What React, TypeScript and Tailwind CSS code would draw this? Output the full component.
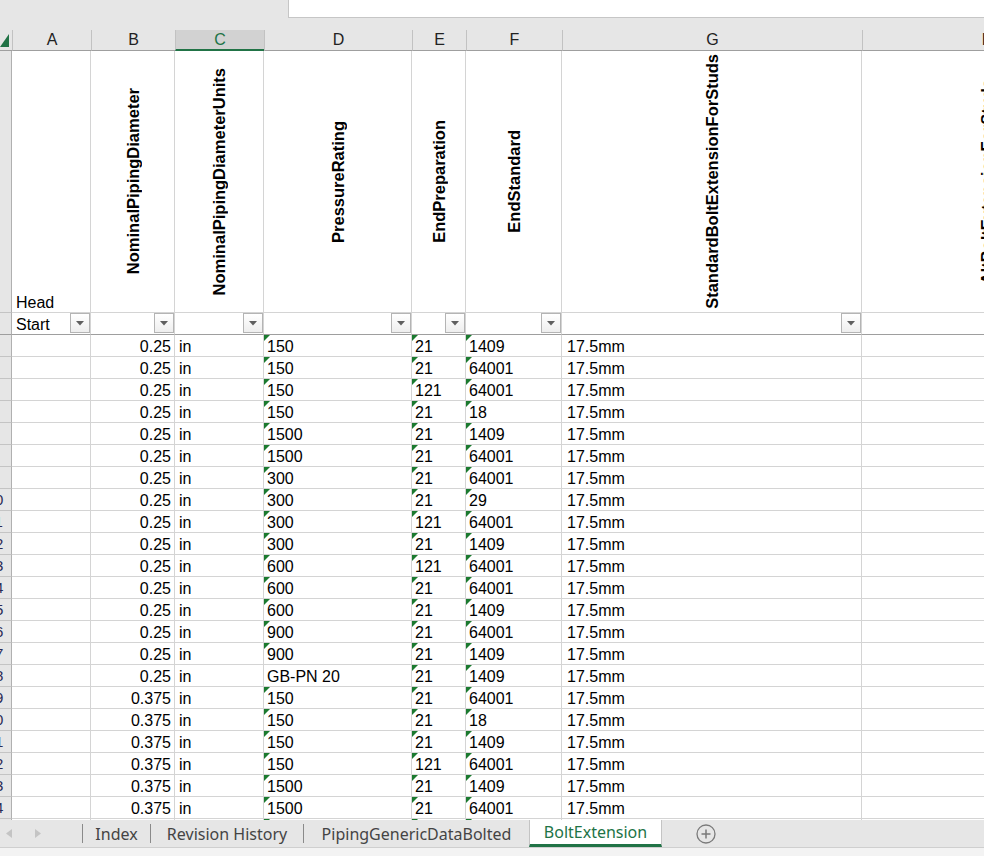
import React from 'react';

const COLS = [12, 79, 84, 89, 148, 54, 96, 300, 250];
const LETTERS = ['', 'A', 'B', 'C', 'D', 'E', 'F', 'G', 'H'];

const HEADERS = [
  '',
  '',
  'NominalPipingDiameter',
  'NominalPipingDiameterUnits',
  'PressureRating',
  'EndPreparation',
  'EndStandard',
  'StandardBoltExtensionForStuds',
  'AltBoltExtensionForStuds',
];

// [diameter, pressure, endPrep, endStd]
const ROWS: [string, string, string, string][] = [
  ['0.25', '150', '21', '1409'],
  ['0.25', '150', '21', '64001'],
  ['0.25', '150', '121', '64001'],
  ['0.25', '150', '21', '18'],
  ['0.25', '1500', '21', '1409'],
  ['0.25', '1500', '21', '64001'],
  ['0.25', '300', '21', '64001'],
  ['0.25', '300', '21', '29'],
  ['0.25', '300', '121', '64001'],
  ['0.25', '300', '21', '1409'],
  ['0.25', '600', '121', '64001'],
  ['0.25', '600', '21', '64001'],
  ['0.25', '600', '21', '1409'],
  ['0.25', '900', '21', '64001'],
  ['0.25', '900', '21', '1409'],
  ['0.25', 'GB-PN 20', '21', '1409'],
  ['0.375', '150', '21', '64001'],
  ['0.375', '150', '21', '18'],
  ['0.375', '150', '21', '1409'],
  ['0.375', '150', '121', '64001'],
  ['0.375', '1500', '21', '1409'],
  ['0.375', '1500', '21', '64001'],
  ['0.375', '1500', '121', '64001'],
];

function NumFlag() {
  return (
    <svg width="6" height="6" viewBox="0 0 6 6" className="absolute top-0 left-0">
      <polygon points="0,0 6,0 0,6" fill="#1b7a2f" />
    </svg>
  );
}

function FilterButton() {
  return (
    <div className="ml-auto mb-[1px] self-center w-[20px] h-[20px] shrink-0 border border-[#b4b4b4] bg-gradient-to-b from-white to-[#eeeeee] flex items-center justify-center">
      <svg width="8" height="5" viewBox="0 0 8 5">
        <polygon points="0,0 8,0 4,4.5" fill="#5f5f5f" />
      </svg>
    </div>
  );
}

function RowHead({ n, h, dark }: { n?: number; h: string; dark?: boolean }) {
  return (
    <div
      className={`w-[12px] shrink-0 overflow-hidden bg-[#e6e6e6] border-r border-[#b0b0b0] ${h} ${dark ? 'border-b border-b-[#9e9e9e]' : 'border-b border-b-[#c4c4c4]'}`}
    >
      <div className="-ml-[18px] w-[26px] h-full flex items-end pb-[1px] justify-center text-[15px] leading-[18px] text-[#2b2b55]">
        {n}
      </div>
    </div>
  );
}

function ColumnHeaderRow() {
  return (
    <div className="flex h-[21px] shrink-0">
      <div className="w-[12px] shrink-0 bg-[#e6e6e6] border-b border-[#9f9f9f] flex items-end justify-start pb-[3px]">
        <svg width="9" height="13" viewBox="0 0 9 13">
          <polygon points="9,0 9,13 0,13" fill="#217346" />
        </svg>
      </div>
      {COLS.slice(1).map((w, i) => {
        const selected = LETTERS[i + 1] === 'C';
        return (
          <div
            key={i}
            style={{ width: w }}
            className={`shrink-0 flex items-center justify-center text-[16px] border-l border-[#c2c2c2] ${
              selected
                ? 'bg-[#d2d2d2] text-[#217346] border-b-2 border-b-[#217346]'
                : 'bg-[#e6e6e6] text-[#222] border-b border-b-[#9f9f9f]'
            }`}
          >
            {LETTERS[i + 1]}
          </div>
        );
      })}
    </div>
  );
}

function TitleRow() {
  return (
    <div className="flex h-[262px] shrink-0">
      <RowHead h="h-[262px]" />
      {COLS.slice(1).map((w, i) => (
        <div
          key={i}
          style={{ width: w }}
          className="shrink-0 border-r border-b border-[#d4d4d4] flex items-center justify-center"
        >
          {i === 0 ? (
            <span className="self-end mr-auto pl-[4px] text-[16px] leading-[18px] text-black">Head</span>
          ) : (
            <span className="[writing-mode:vertical-rl] rotate-180 font-bold text-[16.5px] text-black whitespace-nowrap leading-[20px]">
              {HEADERS[i + 1]}
            </span>
          )}
        </div>
      ))}
    </div>
  );
}

function FilterRow() {
  return (
    <div className="flex h-[22px] shrink-0">
      <RowHead h="h-[22px]" dark />
      {COLS.slice(1).map((w, i) => (
        <div
          key={i}
          style={{ width: w }}
          className="shrink-0 border-r border-[#d4d4d4] border-b border-b-[#9e9e9e] flex items-end pl-[4px] text-[16px] leading-[18px] text-black"
        >
          {i === 0 && <span>Start</span>}
          {i < 7 && <FilterButton />}
        </div>
      ))}
    </div>
  );
}

function DataRow({ r, n }: { r: [string, string, string, string]; n: number }) {
  const [dia, pr, ep, es] = r;
  const cell =
    'shrink-0 h-[22px] border-r border-b border-[#d4d4d4] flex items-end text-[16px] leading-[18px] text-black whitespace-nowrap overflow-hidden';
  return (
    <div className="flex h-[22px] shrink-0">
      <RowHead n={n} h="h-[22px]" />
      <div className={`${cell} w-[79px]`} />
      <div className={`${cell} w-[84px] justify-end pr-[3px]`}>{dia}</div>
      <div className={`${cell} w-[89px] pl-[4px]`}>in</div>
      <div className={`${cell} w-[148px] pl-[3px] relative`}>
        {pr !== 'GB-PN 20' && <NumFlag />}
        {pr}
      </div>
      <div className={`${cell} w-[54px] pl-[3px] relative`}>
        <NumFlag />
        {ep}
      </div>
      <div className={`${cell} w-[96px] pl-[3px] relative`}>
        <NumFlag />
        {es}
      </div>
      <div className={`${cell} w-[300px] pl-[5px]`}>17.5mm</div>
      <div className={`${cell} w-[250px]`} />
    </div>
  );
}

function SheetTabs() {
  const sep = <div className="w-px h-[19px] bg-[#8a8a8a] self-center shrink-0" />;
  return (
    <div className="h-[27px] shrink-0 bg-[#e6e6e6] flex items-stretch font-['Noto_Sans',sans-serif] text-[16px] text-[#444]">
      <div className="w-[82px] shrink-0 flex items-center">
        <svg width="6" height="9" viewBox="0 0 6 9" className="ml-[6px]">
          <polygon points="6,0 6,9 0,4.5" fill="#c4c4c4" />
        </svg>
        <svg width="6" height="9" viewBox="0 0 6 9" className="ml-[23px]">
          <polygon points="0,0 0,9 6,4.5" fill="#c4c4c4" />
        </svg>
      </div>
      {sep}
      <div className="w-[67px] shrink-0 flex items-center justify-center">Index</div>
      {sep}
      <div className="w-[152px] shrink-0 flex items-center justify-center">Revision History</div>
      {sep}
      <div className="w-[225px] shrink-0 flex items-center justify-center">PipingGenericDataBolted</div>
      <div className="w-[133px] shrink-0 flex items-center justify-center bg-white border-l border-r border-[#c4c4c4] border-b-[3px] border-b-[#217346] text-[#217346]">
        BoltExtension
      </div>
      <div className="ml-[34px] flex items-center">
        <svg width="20" height="20" viewBox="0 0 20 20">
          <circle cx="10" cy="10" r="9" fill="none" stroke="#7a7a7a" strokeWidth="1.3" />
          <path d="M10 5.5v9M5.5 10h9" stroke="#7a7a7a" strokeWidth="1.5" />
        </svg>
      </div>
    </div>
  );
}

export default function App() {
  return (
    <div className="w-[984px] h-[856px] overflow-hidden bg-white flex flex-col font-['Liberation_Sans',Arial,sans-serif]">
      <div className="h-[30px] shrink-0 bg-[#e6e6e6] flex items-start">
        <div className="w-[288px] shrink-0" />
        <div className="flex-1 h-[18px] bg-white border-l border-b border-[#c6c6c6]" />
      </div>
      <div className="h-[790px] shrink-0 overflow-hidden flex flex-col">
        <ColumnHeaderRow />
        <TitleRow />
        <FilterRow />
        {ROWS.map((r, i) => (
          <DataRow key={i} r={r} n={i + 3} />
        ))}
      </div>
      <SheetTabs />
      <div className="flex-1 bg-[#f3f3f3] border-t border-[#cfcfcf]" />
    </div>
  );
}
